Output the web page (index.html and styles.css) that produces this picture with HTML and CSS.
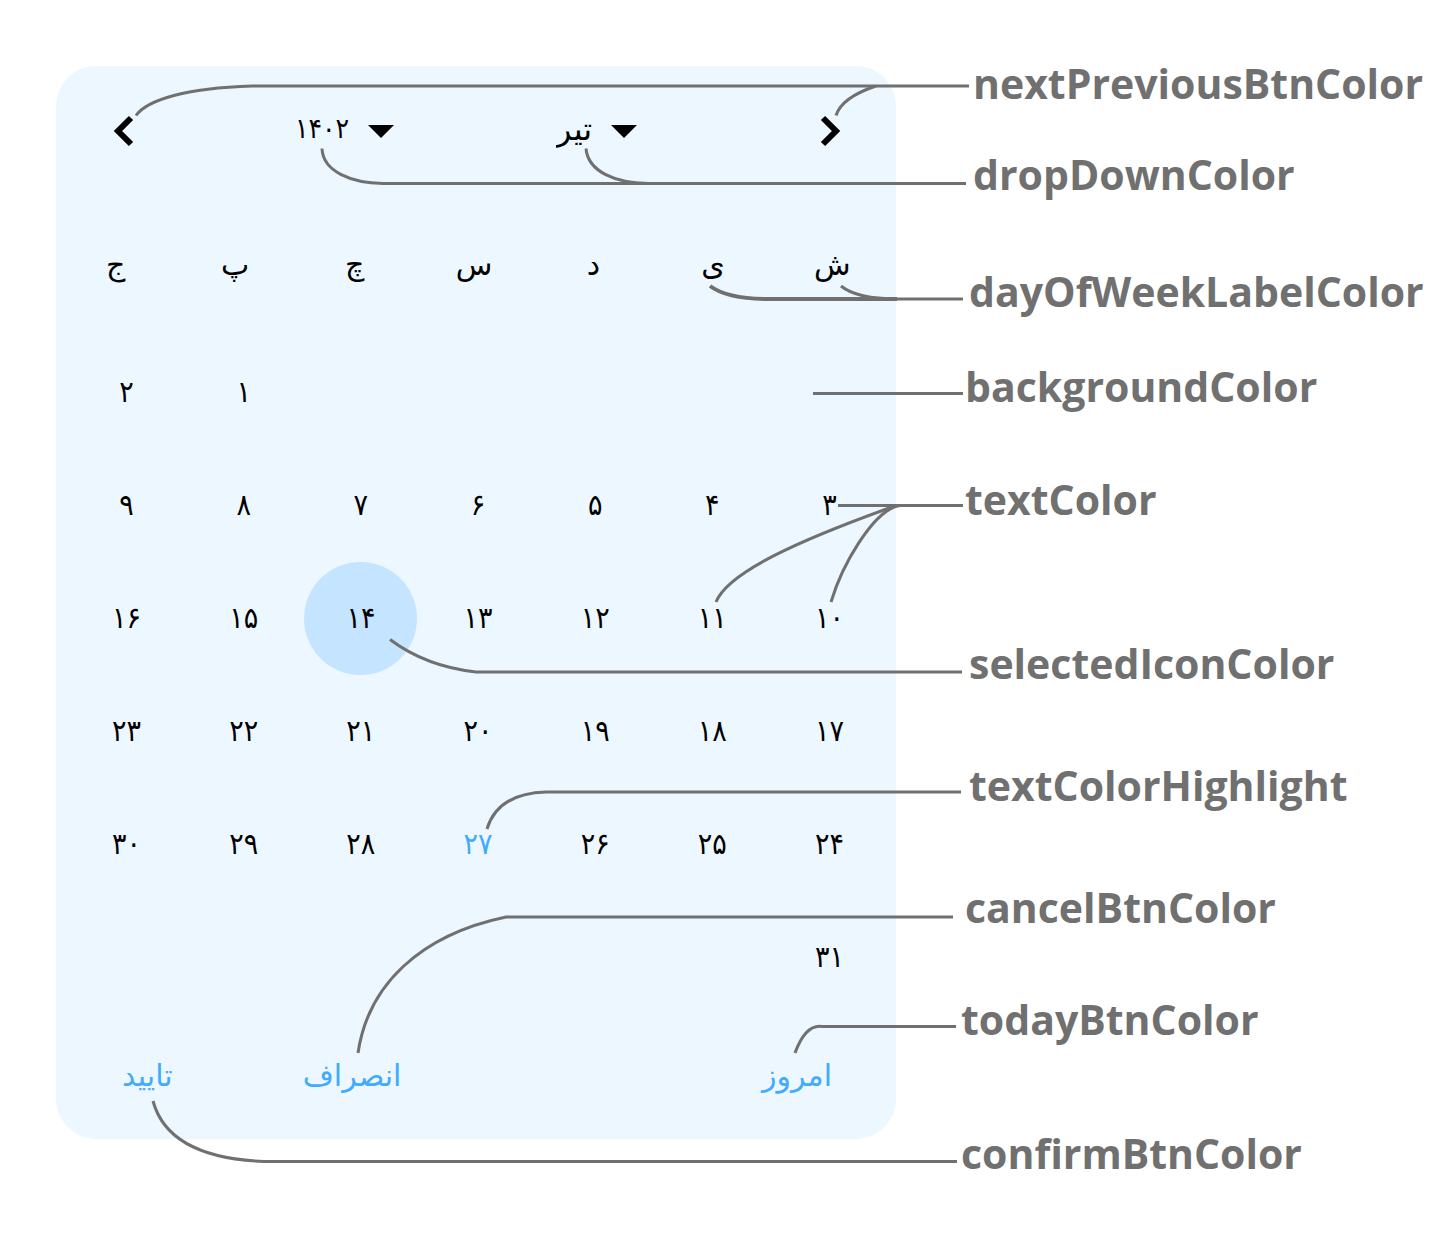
FILE: index.html
```html
<!DOCTYPE html>
<html lang="en">
<head>
<meta charset="utf-8">
<meta name="viewport" content="width=device-width, initial-scale=1">
<title>Date picker colors</title>
<link rel="stylesheet" href="styles.css">
</head>
<body>
<main class="diagram">
  <section class="calendar" lang="fa">
    <header class="calendar-header">
      <button class="nav-button" type="button" aria-label="قبلی"><svg width="24" height="32" viewBox="0 0 24 32"><path d="M19 3 6 16 19 29"/></svg></button>
      <div class="dropdown">
        <select class="year" aria-label="سال"><option>۱۴۰۲</option></select>
        <svg class="arrow" width="26" height="13" viewBox="0 0 26 13"><path d="M0 0H26L13 13Z"/></svg>
      </div>
      <div class="dropdown">
        <select class="month-name" aria-label="ماه"><option>تیر</option></select>
        <svg class="arrow" width="26" height="13" viewBox="0 0 26 13"><path d="M0 0H26L13 13Z"/></svg>
      </div>
      <button class="nav-button" type="button" aria-label="بعدی"><svg width="24" height="32" viewBox="0 0 24 32"><path d="M5 3 18 16 5 29"/></svg></button>
    </header>
    <table class="month" dir="rtl">
      <thead>
        <tr><th>ش</th><th>ی</th><th>د</th><th>س</th><th>چ</th><th>پ</th><th>ج</th></tr>
      </thead>
      <tbody>
        <tr><td></td><td></td><td></td><td></td><td></td><td>۱</td><td>۲</td></tr>
        <tr><td>۳</td><td>۴</td><td>۵</td><td>۶</td><td>۷</td><td>۸</td><td>۹</td></tr>
        <tr><td>۱۰</td><td>۱۱</td><td>۱۲</td><td>۱۳</td><td><span class="selected">۱۴</span></td><td>۱۵</td><td>۱۶</td></tr>
        <tr><td>۱۷</td><td>۱۸</td><td>۱۹</td><td>۲۰</td><td>۲۱</td><td>۲۲</td><td>۲۳</td></tr>
        <tr><td>۲۴</td><td>۲۵</td><td>۲۶</td><td class="highlight">۲۷</td><td>۲۸</td><td>۲۹</td><td>۳۰</td></tr>
        <tr><td>۳۱</td><td></td><td></td><td></td><td></td><td></td><td></td></tr>
      </tbody>
    </table>
    <footer class="actions">
      <button type="button">تایید</button>
      <button type="button">انصراف</button>
      <button type="button">امروز</button>
    </footer>
  </section>
  <ul class="labels">
    <li class="indent-3">nextPreviousBtnColor</li>
    <li class="indent-3">dropDownColor</li>
    <li class="indent-2">dayOfWeekLabelColor</li>
    <li class="indent-1">backgroundColor</li>
    <li class="indent-1">textColor</li>
    <li class="indent-2">selectedIconColor</li>
    <li class="indent-2">textColorHighlight</li>
    <li class="indent-1">cancelBtnColor</li>
    <li>todayBtnColor</li>
    <li>confirmBtnColor</li>
  </ul>
  <svg class="connectors" viewBox="0 0 1445 1243" preserveAspectRatio="none" aria-hidden="true">
    <path d="M136 115.500C147 100 185 88 252 86H969"/>
    <path d="M836 115.500C840 103 855 93 876 86"/>
    <path d="M322 148.500C323 172 352 183 383 183.500H966"/>
    <path d="M586 148.500C588 172 616 183 648 183.500"/>
    <path class="thick" d="M710 286C722 295 740 299 768 299H897"/>
    <path d="M841 286C852 295 870 299 897 299H963"/>
    <path d="M813 393.500H963"/>
    <path d="M838 505.500H963"/>
    <path d="M716 602C728 572 800 540 892 507Q896 505.500 900 505.500"/>
    <path d="M831 602C843 562 872 516 894 507Q898 505.500 902 505.500"/>
    <path d="M390 639.500C412 656 440 668 476 672H962"/>
    <path d="M487 829C494 806 512 793 546 792H961"/>
    <path d="M358 1053C368 985 420 935 506 917H953"/>
    <path d="M795 1053C802 1034 811 1025 822 1026.500H956"/>
    <path d="M153 1101C163 1138 200 1159 264 1161.500H957"/>
  </svg>
</main>
</body>
</html>
```
FILE: styles.css
```css
* { box-sizing: border-box; }
body { margin: 0; background: #fff; }

.diagram {
  position: relative;
  display: grid;
  grid-template-columns: 840fr 484fr;
  column-gap: 65px;
  padding: 66px 0 104px 56px;
}

.calendar {
  background: #ecf7ff;
  border-radius: 40px;
  color: #000;
  font-family: "DejaVu Sans Condensed", "DejaVu Sans", sans-serif;
  font-size: 30px;
  line-height: 40px;
}
.calendar button, .calendar select {
  appearance: none;
  border: 0;
  padding: 0;
  background: none;
  color: inherit;
  font: inherit;
}

.calendar-header {
  display: grid;
  grid-template-columns: 183fr 261fr 262fr 24px;
  align-items: center;
  height: 130px;
  padding: 0 54px 0 56px;
}
.nav-button { width: 24px; height: 32px; }
.nav-button svg { display: block; fill: none; stroke: #000; stroke-width: 6; }
.dropdown { display: grid; justify-self: start; align-items: center; }
.dropdown select { grid-area: 1 / 1; padding: 0 44px 4px 0; }
.dropdown .year { font-size: 28px; }
.dropdown .month-name { font-family: "DejaVu Sans", sans-serif; font-size: 32px; }
.arrow { grid-area: 1 / 1; justify-self: end; pointer-events: none; }

.month, .month thead, .month tbody { display: block; }
.month thead { padding-right: 4px; }
.month tbody { padding: 0 8px 0 12px; }
.month tr { display: grid; grid-template-columns: repeat(7, 1fr); }
.month th, .month td {
  display: grid;
  place-items: center;
  height: 113px;
  padding: 0 0 2px;
  font-weight: 400;
}
.month td:has(.selected) { padding: 0; }
.month th {
  height: 140px;
  font-family: "DejaVu Sans", sans-serif;
}
.selected {
  display: grid;
  place-items: center;
  width: 113px;
  height: 113px;
  padding-bottom: 2px;
  border-radius: 50%;
  background: #c4e4ff;
}
.highlight { color: #42aaff; }

.actions {
  display: grid;
  grid-template-columns: 181fr 460fr auto;
  align-items: center;
  justify-items: start;
  height: 125px;
  padding: 0 64px 2px 66px;
  color: #42aaff;
  font-family: "DejaVu Sans", sans-serif;
}

.labels {
  display: grid;
  grid-template-rows: 91px 117px 95px 113px 164px 122px 122px 112px 134px 48px;
  height: 0;
  margin: -7px 0 0;
  padding: 0;
  list-style: none;
  color: #707070;
  font: 700 41px/48px "Open Sans", "Noto Sans", sans-serif;
}
.indent-1 { padding-left: 4px; }
.indent-2 { padding-left: 8px; }
.indent-3 { padding-left: 12px; }

.connectors {
  position: absolute;
  inset: 0;
  width: 100%;
  height: 100%;
  fill: none;
  stroke: #707070;
  stroke-width: 3;
  pointer-events: none;
}
.connectors .thick { stroke-width: 4; }
```
